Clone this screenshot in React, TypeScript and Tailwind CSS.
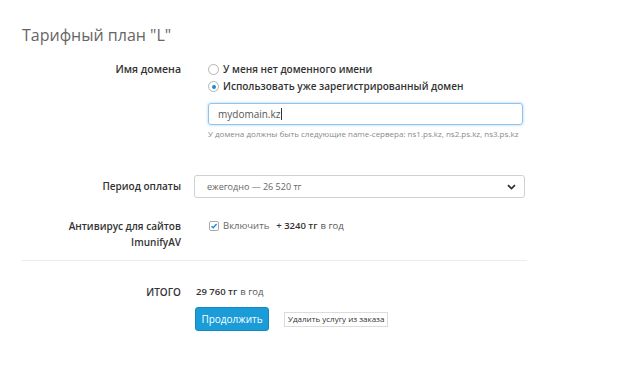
import React from "react";

const font = { fontFamily: '"Open Sans", "Noto Sans", sans-serif' };

function Radio({ checked }: { checked?: boolean }) {
  return (
    <span className="inline-flex h-[11px] w-[11px] shrink-0 items-center justify-center rounded-full border border-[#b5b5b5] bg-white">
      {checked && <span className="h-[4px] w-[4px] rounded-full bg-[#1e88d8]" />}
    </span>
  );
}

export default function App() {
  return (
    <div style={font} className="min-h-[370px] w-[623px] bg-white text-[#333]">
      <div className="pl-[22px] pt-[24px]">
        <h1 className="text-[16px] font-normal leading-[23px] text-[#666]">Тарифный план "L"</h1>

        {/* Domain row */}
        <div className="mt-[14px] flex">
          <div className="w-[159px] text-right text-[10.5px] font-semibold leading-[17px]">Имя домена</div>
          <div className="ml-[15px] w-[330px]">
            <div className="flex flex-col pl-[12px]">
              <label className="flex h-[17px] items-center gap-[4px] text-[10px] font-semibold">
                <Radio />
                <span>У меня нет доменного имени</span>
              </label>
              <label className="flex h-[17px] items-center gap-[4px] text-[10px] font-semibold">
                <Radio checked />
                <span>Использовать уже зарегистрированный домен</span>
              </label>
              <div className="mt-[8px] flex h-[22px] w-[315px] items-center rounded-[3px] border border-[#8fc3ee] pl-[9px] text-[10px] text-[#555] shadow-[0_0_3px_rgba(102,175,233,0.6)]">
                mydomain.kz<span className="ml-[1px] h-[12px] w-px bg-[#333]" />
              </div>
              <div className="mt-[3px] text-[8px] leading-[12px] text-[#8a8a8a]">
                У домена должны быть следующие name-сервера: ns1.ps.kz, ns2.ps.kz, ns3.ps.kz
              </div>
            </div>
          </div>
        </div>

        {/* Period row */}
        <div className="mt-[35px] flex items-center">
          <div className="w-[159px] text-right text-[10px] font-semibold">Период оплаты</div>
          <div className="ml-[13px] flex h-[23px] w-[331px] items-center justify-between rounded-[3px] border border-[#d0d0d0] pl-[12px] pr-[8px] text-[9px] text-[#666]">
            <span>ежегодно — 26 520 тг</span>
            <svg width="9" height="6" viewBox="0 0 9 6" fill="none">
              <path d="M1 1.2 L4.5 4.6 L8 1.2" stroke="#333" strokeWidth="1.8" />
            </svg>
          </div>
        </div>

        {/* Antivirus row */}
        <div className="mt-[20px] flex">
          <div className="w-[159px] text-right text-[10px] font-semibold leading-[16px]">
            Антивирус для сайтов
            <br />
            ImunifyAV
          </div>
          <div className="ml-[15px] flex h-[16px] items-center pl-[13px] text-[9.5px]">
            <span className="mr-[4px] inline-flex h-[10px] w-[10px] items-center justify-center rounded-[2px] border border-[#aaa] bg-white">
              <svg width="8" height="8" viewBox="0 0 8 8" fill="none">
                <path d="M1.5 4.2 L3.2 5.8 L6.6 2" stroke="#1e88d8" strokeWidth="1.3" />
              </svg>
            </span>
            <span className="text-[#666]">Включить</span>
            <span className="ml-[7px] font-semibold text-[#333]">+ 3240 тг</span>
            <span className="ml-[3px] text-[#555]">в год</span>
          </div>
        </div>

        <div className="mt-[10px] h-px w-[505px] bg-[#ececec]" />

        {/* Total */}
        <div className="mt-[24px] flex items-center">
          <div className="w-[159px] text-right text-[10px] font-semibold">ИТОГО</div>
          <div className="ml-[15px] text-[9.5px]">
            <span className="font-semibold text-[#333]">29 760 тг</span>
            <span className="ml-[3px] text-[#555]">в год</span>
          </div>
        </div>

        <div className="mt-[7px] flex items-center pl-[173px]">
          <button className="h-[24px] w-[74px] rounded-[3px] border border-[#1787c0] bg-[#1a9cd8] text-[10px] text-white">
            Продолжить
          </button>
          <button className="ml-[15px] flex h-[15px] items-center border border-[#dcdcdc] bg-white px-[3px] text-[8px] text-[#333]">
            Удалить услугу из заказа
          </button>
        </div>
      </div>
    </div>
  );
}
